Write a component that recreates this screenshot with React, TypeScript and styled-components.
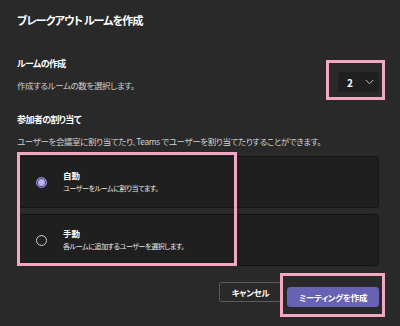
import React from 'react';
import styled, { createGlobalStyle } from 'styled-components';

const GlobalStyle = createGlobalStyle`
  html, body {
    margin: 0;
    padding: 0;
    background: #292929;
  }
  body {
    font-family: "Noto Sans CJK JP", "Noto Sans", sans-serif;
    -webkit-font-smoothing: antialiased;
  }
  h1, h2, p, span, button {
    font-feature-settings: "palt" 1;
    font-variant-east-asian: proportional-width;
  }
`;

const Dialog = styled.div`
  width: 400px;
  height: 326px;
  box-sizing: border-box;
  padding: 12px 21px 0 17px;
  background: #292929;
  color: #ffffff;
  display: flex;
  flex-direction: column;
`;

const Title = styled.h1`
  margin: 0;
  font-size: 11px;
  line-height: 17px;
  font-weight: 700;
  letter-spacing: -0.8px;
`;

const SectionTitle = styled.h2<{ $top: number }>`
  margin: ${p => p.$top}px 0 0;
  font-size: 9px;
  line-height: 14px;
  font-weight: 700;
  letter-spacing: -0.6px;
`;

const Description = styled.p<{ $top: number }>`
  margin: ${p => p.$top}px 0 0;
  font-size: 8.5px;
  line-height: 13px;
  color: #d0d0d0;
  white-space: nowrap;
  letter-spacing: -0.4px;
`;

const CountRow = styled.div`
  display: flex;
  align-items: center;
  justify-content: space-between;
`;

const Marked = styled.div`
  position: relative;
`;

const Highlight = styled.div<{ $t: number; $r: number; $b: number; $l: number }>`
  position: absolute;
  top: ${p => -p.$t}px;
  right: ${p => -p.$r}px;
  bottom: ${p => -p.$b}px;
  left: ${p => -p.$l}px;
  border: 3px solid #f2a7c4;
  pointer-events: none;
`;

const Dropdown = styled.button`
  width: 41px;
  height: 20px;
  margin-top: 1px;
  box-sizing: border-box;
  padding: 0 5px 0 9px;
  border: none;
  border-radius: 4px;
  background: #1f1f1f;
  color: #ffffff;
  display: flex;
  align-items: center;
  justify-content: space-between;
  font-family: inherit;
  font-size: 10px;
  font-weight: 700;
`;

const Options = styled.div`
  margin-top: 8px;
  display: flex;
  flex-direction: column;
  gap: 6px;
`;

const OptionCard = styled.div`
  height: 52px;
  box-sizing: border-box;
  border: 1px solid #141414;
  border-radius: 4px;
  background: #1f1f1f;
  display: flex;
  align-items: center;
  padding-left: 18px;
  gap: 16px;
`;

const Radio = styled.span<{ $checked: boolean }>`
  width: 11px;
  height: 11px;
  box-sizing: border-box;
  border-radius: 50%;
  flex-shrink: 0;
  border: 1px solid ${p => (p.$checked ? '#8f8ad6' : '#c8c8c8')};
  background: ${p => (p.$checked ? '#b7b3f2' : 'transparent')};
  box-shadow: ${p => (p.$checked ? 'inset 0 0 0 1px #3a3768' : 'none')};
`;

const OptionText = styled.div`
  display: flex;
  flex-direction: column;
  margin-top: -2px;
`;

const OptionTitle = styled.span`
  font-size: 8.5px;
  line-height: 14px;
  font-weight: 700;
`;

const OptionHint = styled.span`
  font-size: 7px;
  line-height: 12px;
  color: #e6e6e6;
  letter-spacing: -0.4px;
`;

const Footer = styled.div`
  margin-top: 16px;
  display: flex;
  justify-content: flex-end;
  gap: 5px;
`;

const Button = styled.button<{ $primary?: boolean }>`
  height: 20px;
  box-sizing: border-box;
  padding: 0;
  width: ${p => (p.$primary ? 92 : 63)}px;
  border-radius: 3px;
  border: 1px solid ${p => (p.$primary ? '#6762b3' : '#5c5c5c')};
  background: ${p => (p.$primary ? '#6762b3' : '#292929')};
  color: #ffffff;
  font-family: inherit;
  font-size: 8.5px;
  font-weight: 700;
  letter-spacing: -0.3px;
`;

const Chevron = () => (
  <svg width="9" height="6" viewBox="0 0 9 6" fill="none">
    <path d="M0.8 1L4.5 4.8L8.2 1" stroke="#bdbdbd" strokeWidth="1" />
  </svg>
);

export default function App() {
  return (
    <>
      <GlobalStyle />
      <Dialog>
        <Title>ブレークアウト ルームを作成</Title>

        <SectionTitle $top={28}>ルームの作成</SectionTitle>
        <CountRow>
          <Description $top={8}>作成するルームの数を選択します。</Description>
          <Marked>
            <Highlight $t={11} $r={6} $b={8} $l={12} />
            <Dropdown>
              <span>2</span>
              <Chevron />
            </Dropdown>
          </Marked>
        </CountRow>

        <SectionTitle $top={21}>参加者の割り当て</SectionTitle>
        <Description $top={8}>
          ユーザーを会議室に割り当てたり、Teams でユーザーを割り当てたりすることができます。
        </Description>

        <Marked>
          <Options>
            <OptionCard>
              <Radio $checked />
              <OptionText>
                <OptionTitle>自動</OptionTitle>
                <OptionHint>ユーザーをルームに割り当てます。</OptionHint>
              </OptionText>
            </OptionCard>
            <OptionCard>
              <Radio $checked={false} />
              <OptionText>
                <OptionTitle>手動</OptionTitle>
                <OptionHint>各ルームに追加するユーザーを選択します。</OptionHint>
              </OptionText>
            </OptionCard>
          </Options>
          <Highlight $t={-4} $r={-142} $b={0} $l={0} />
        </Marked>

        <Footer>
          <Button>キャンセル</Button>
          <Marked>
            <Button $primary>ミーティングを作成</Button>
            <Highlight $t={9} $r={6} $b={10} $l={7} />
          </Marked>
        </Footer>
      </Dialog>
    </>
  );
}
